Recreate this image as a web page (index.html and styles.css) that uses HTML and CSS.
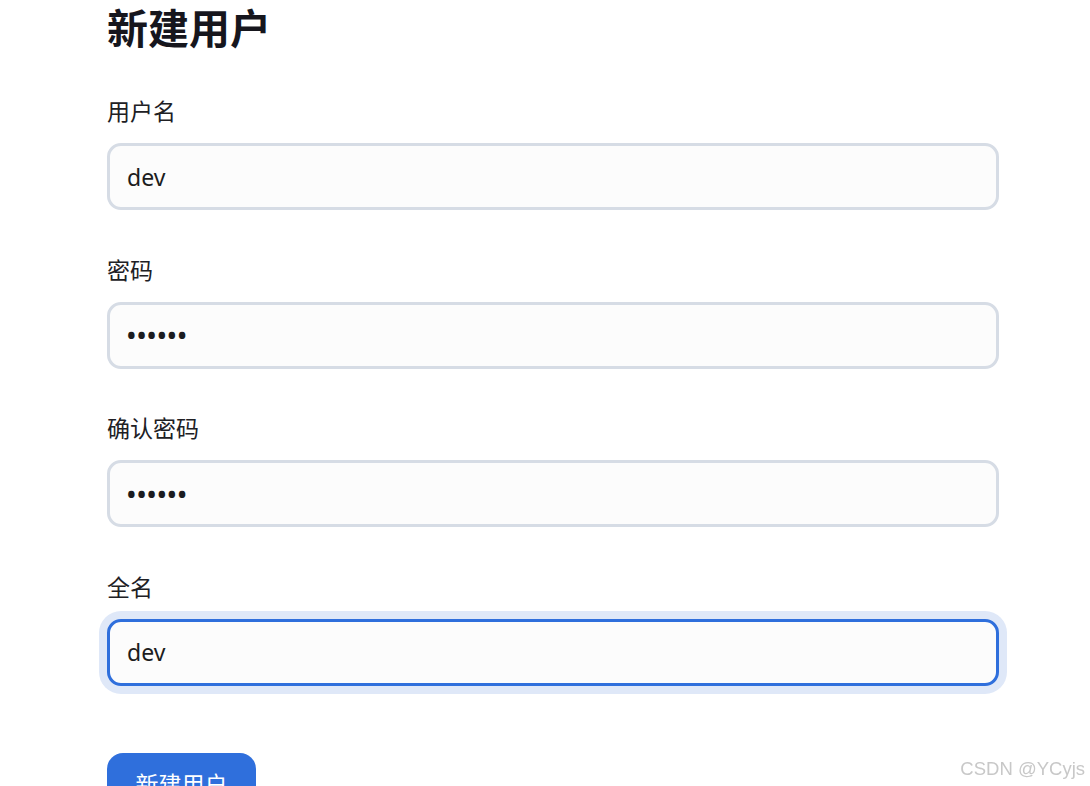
FILE: index.html
```html
<!DOCTYPE html>
<html lang="zh-CN">
<head>
    <meta charset="UTF-8">
    <meta name="viewport" content="width=device-width, initial-scale=1.0">
    <title>新建用户</title>
    <link rel="stylesheet" href="styles.css">
</head>
<body>
    <div class="page">
        <h1 class="title">新建用户</h1>

        <form class="user-form" onsubmit="return false;">
            <div class="field">
                <label for="username">用户名</label>
                <input type="text" id="username" value="dev">
            </div>
            <div class="field">
                <label for="password">密码</label>
                <input type="password" id="password" value="123456">
            </div>
            <div class="field">
                <label for="confirm">确认密码</label>
                <input type="password" id="confirm" value="123456">
            </div>
            <div class="field">
                <label for="fullname">全名</label>
                <input type="text" id="fullname" class="is-focus" value="dev">
            </div>

            <button type="submit" class="submit-btn">新建用户</button>
        </form>
    </div>

    <div class="watermark">CSDN @YCyjs</div>
</body>
</html>
```

FILE: styles.css
```css
body {
    margin: 0;
    background-color: #ffffff;
    font-family: "Noto Sans", "Noto Sans CJK SC", sans-serif;
    color: #1f1f24;
}
.page {
    padding: 0 0 0 107px;
    width: 892px;
}
.title {
    margin: 4px 0 45px;
    font-size: 41px;
    line-height: 48px;
    font-weight: 700;
    color: #16161d;
}
.field {
    display: flex;
    flex-direction: column;
    margin-bottom: 45.67px;
}
.field label {
    font-size: 23px;
    line-height: 28px;
    margin-bottom: 18px;
    color: #202024;
}
.field input {
    box-sizing: border-box;
    width: 892px;
    height: 67px;
    padding: 0 17px;
    border: 3px solid #d6dce5;
    border-radius: 14px;
    background-color: #fcfcfc;
    font-family: "Noto Sans", "Noto Sans CJK SC", sans-serif;
    font-size: 23px;
    color: #1c1c20;
    outline: none;
}
.field input[type="password"] {
    font-weight: 700;
    letter-spacing: 1.5px;
}
.field input.is-focus {
    border-color: #2f6fdc;
    box-shadow: 0 0 0 8px #dfe8f8;
}
.submit-btn {
    margin-top: 21px;
    width: 149px;
    height: 60px;
    border: none;
    border-radius: 16px;
    background-color: #2f6fdc;
    color: #ffffff;
    font-family: "Noto Sans CJK SC", sans-serif;
    font-size: 23px;
    cursor: pointer;
}
.watermark {
    position: fixed;
    right: 5px;
    bottom: 6px;
    font-family: "Liberation Sans", Arial, sans-serif;
    font-size: 18.5px;
    color: #c8c8c8;
}
```
